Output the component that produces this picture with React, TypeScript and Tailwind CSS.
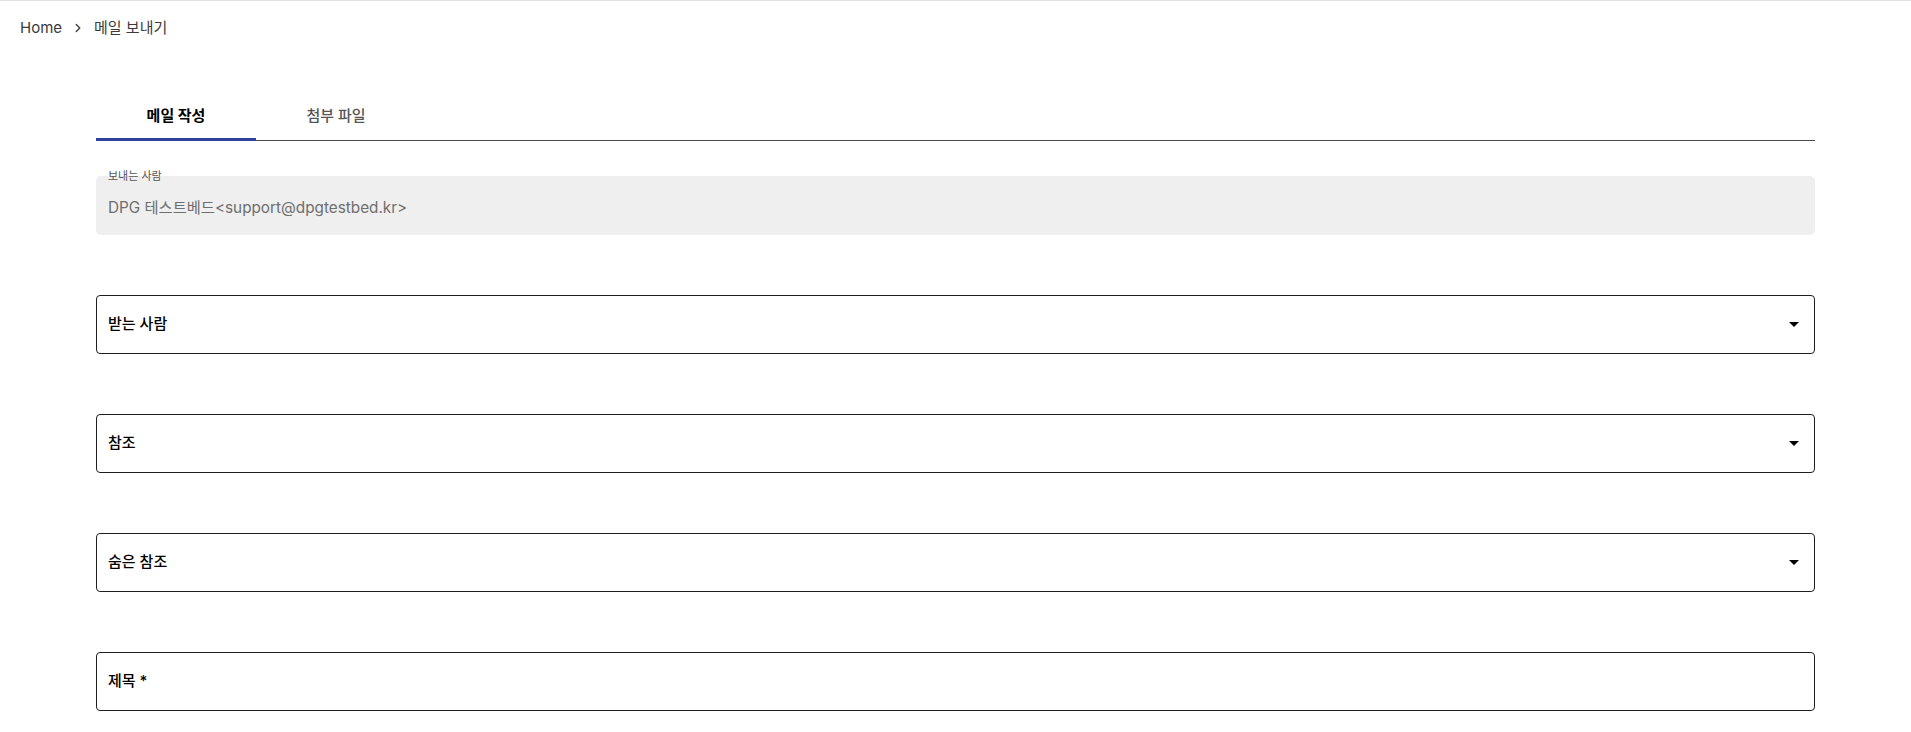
import { ChevronRight } from "lucide-react";

const font = { fontFamily: '"Inter", "Noto Sans CJK KR", sans-serif' };

function SelectField({ label }: { label: string }) {
  return (
    <div className="mt-[60px] h-[59px] rounded-[4px] border border-[#1f1f1f] flex items-center justify-between pl-[11px] pr-[15px]">
      <span className="text-[15px] font-medium text-black">{label}</span>
      <svg width="10" height="5" viewBox="0 0 10 5" className="text-black">
        <path d="M0 0l5 5 5-5z" fill="currentColor" />
      </svg>
    </div>
  );
}

export default function App() {
  const tabs = ["메일 작성", "첨부 파일"];

  return (
    <div className="min-h-screen bg-white border-t border-[#e3e3e3]" style={font}>
      {/* Breadcrumb */}
      <nav className="flex items-center h-[20px] mt-[17px] pl-[20px] text-[15px] text-[#3a3a3a]">
        <span>Home</span>
        <ChevronRight className="w-[14px] h-[14px] mx-[9px] text-[#444]" strokeWidth={2.5} />
        <span>메일 보내기</span>
      </nav>

      <div className="px-[96px] mt-[55px]">
        {/* Tabs */}
        <div className="flex border-b border-[#4a4a4a]">
          {tabs.map((t, i) => (
            <div
              key={t}
              className={`relative w-[160px] h-[47px] flex items-center justify-center text-[15px] ${
                i === 0 ? "font-bold text-black" : "font-medium text-[#555]"
              }`}
            >
              {t}
              {i === 0 && (
                <div className="absolute left-0 right-0 -bottom-px h-[3px] bg-[#2f3f9c]" />
              )}
            </div>
          ))}
        </div>

        {/* Sender */}
        <div className="relative mt-[35px] h-[59px] rounded-[5px] bg-[#efefef] flex items-center pl-[12px] pt-[6px]">
          <span className="absolute left-[12px] -top-[6px] text-[11px] leading-[13px] text-[#555]">
            보내는 사람
          </span>
          <span className="text-[15.3px] text-[#6e6e6e]">DPG 테스트베드&lt;support@dpgtestbed.kr&gt;</span>
        </div>

        <SelectField label="받는 사람" />
        <SelectField label="참조" />
        <SelectField label="숨은 참조" />

        <div className="mt-[60px] h-[59px] rounded-[4px] border border-[#1f1f1f] flex items-center pl-[11px]">
          <span className="text-[15px] font-medium text-black">제목 *</span>
        </div>
      </div>
    </div>
  );
}
